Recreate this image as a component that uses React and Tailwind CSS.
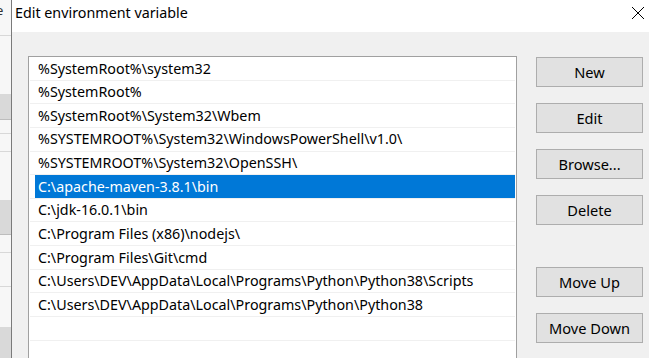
import React from "react";

const PATHS = [
  "%SystemRoot%\\system32",
  "%SystemRoot%",
  "%SystemRoot%\\System32\\Wbem",
  "%SYSTEMROOT%\\System32\\WindowsPowerShell\\v1.0\\",
  "%SYSTEMROOT%\\System32\\OpenSSH\\",
  "C:\\apache-maven-3.8.1\\bin",
  "C:\\jdk-16.0.1\\bin",
  "C:\\Program Files (x86)\\nodejs\\",
  "C:\\Program Files\\Git\\cmd",
  "C:\\Users\\DEV\\AppData\\Local\\Programs\\Python\\Python38\\Scripts",
  "C:\\Users\\DEV\\AppData\\Local\\Programs\\Python\\Python38",
  "",
  "",
];

const SELECTED = 5;

function Btn({ children }) {
  return (
    <button className="h-[30px] w-[107px] bg-[#e1e1e1] border border-[#adadad] text-[14.6px] text-black leading-none">
      {children}
    </button>
  );
}

export default function App() {
  return (
    <div className="w-[649px] h-[358px] flex overflow-hidden bg-white font-['Noto_Sans',sans-serif]">
      {/* window behind the dialog */}
      <div className="w-[12px] h-full flex flex-col bg-[#f7f7f7] border-r border-[#7a7a7a]">
        <div className="h-[36px] border-b border-[#d8d8d8] text-[13px] leading-[20px] -ml-[4px] text-[#333]">e</div>
        <div className="h-[58px]" />
        <div className="h-[26px] bg-[#d9d9d9] border-b border-[#bdbdbd]" />
        <div className="h-[14px] border-b border-[#d8d8d8]" />
        <div className="h-[18px] border-b border-[#d8d8d8]" />
        <div className="h-[48px]" />
        <div className="h-[35px] bg-[#d9d9d9] border-b border-[#bdbdbd]" />
        <div className="h-[18px] border-b border-[#d8d8d8]" />
        <div className="h-[34px] border-b border-[#d8d8d8]" />
        <div className="h-[40px]" />
        <div className="flex-1 bg-[#d9d9d9]" />
      </div>

      <div className="flex-1 flex flex-col min-w-0">
        {/* title bar */}
        <div className="h-[32px] bg-white flex items-center justify-between pl-[3px] pr-[3px] pb-[6px] shrink-0">
          <span className="text-[14.3px] text-black">Edit environment variable</span>
          <svg width="14" height="14" viewBox="0 0 14 14" className="mr-[1px]">
            <path d="M1 1 L13 13 M13 1 L1 13" stroke="#000" strokeWidth="1" />
          </svg>
        </div>

        {/* body */}
        <div className="flex-1 bg-[#f0f0f0] flex items-start pt-[24px] pl-[16px]">
          <div className="w-[489px] h-[320px] bg-white border border-[#a0a0a0] pl-[1px] pr-[1px] overflow-hidden">
            {PATHS.map((p, i) => (
              <div key={i} className="h-[23.64px] border-b border-[#f0f0f0] flex">
                <div
                  className={
                    "flex-1 ml-[5px] pl-[3px] flex items-center text-[14.3px] whitespace-nowrap " +
                    (i === SELECTED ? "bg-[#0078d7] text-white" : "text-black")
                  }
                >
                  {p}
                </div>
              </div>
            ))}
          </div>

          <div className="ml-[19px] flex flex-col">
            <div className="flex flex-col gap-[16px] pt-[1px]">
              <Btn>New</Btn>
              <Btn>Edit</Btn>
              <Btn>Browse...</Btn>
              <Btn>Delete</Btn>
            </div>
            <div className="flex flex-col gap-[16px] mt-[42px]">
              <Btn>Move Up</Btn>
              <Btn>Move Down</Btn>
            </div>
          </div>
        </div>
      </div>
    </div>
  );
}
